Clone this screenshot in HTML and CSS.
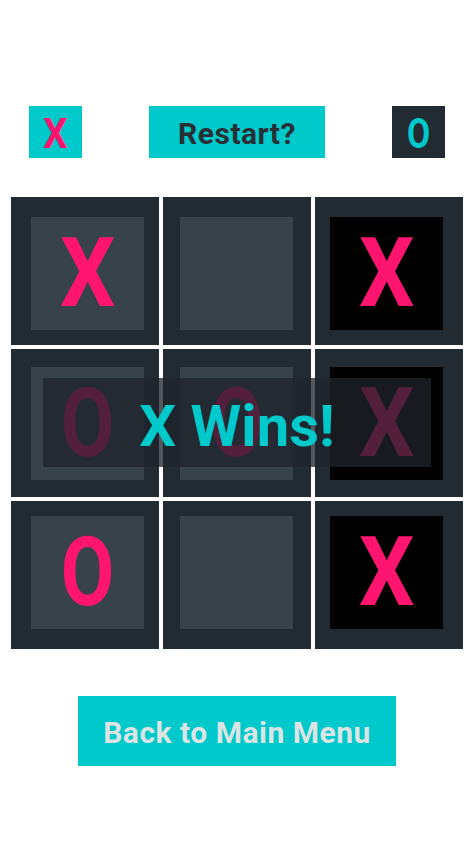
FILE: index.html
```html
<!DOCTYPE html>
<html lang="en">
<head>
<meta charset="utf-8">
<title>Tic Tac Toe</title>
<link rel="stylesheet" href="styles.css">
</head>
<body>
<main class="game">
  <header class="topbar">
    <div class="turn turn-x"><span class="turn-mark">X</span></div>
    <button class="restart">Restart?</button>
    <div class="turn turn-o"><span class="turn-mark o-mark">O</span></div>
  </header>

  <section class="board-wrap">
    <div class="board">
      <div class="cell r1 c1"><div class="slot"><span class="mark x">X</span></div></div>
      <div class="cell r1 c2"><div class="slot"></div></div>
      <div class="cell r1 c3"><div class="slot win"><span class="mark x">X</span></div></div>

      <div class="cell r2 c1"><div class="slot"><span class="mark o">O</span></div></div>
      <div class="cell r2 c2"><div class="slot"><span class="mark o">O</span></div></div>
      <div class="cell r2 c3"><div class="slot win"><span class="mark x">X</span></div></div>

      <div class="cell r3 c1"><div class="slot"><span class="mark o">O</span></div></div>
      <div class="cell r3 c2"><div class="slot"></div></div>
      <div class="cell r3 c3"><div class="slot win"><span class="mark x">X</span></div></div>
    </div>
    <div class="result">X Wins!</div>
  </section>

  <button class="menu-btn">Back to Main Menu</button>
</main>
</body>
</html>
```

FILE: styles.css
```css
* {
  box-sizing: border-box;
}

html, body {
  margin: 0;
  padding: 0;
  background: #ffffff;
}

body {
  font-family: Roboto, "Liberation Sans", sans-serif;
  font-weight: 700;
}

.game {
  width: 474px;
  min-height: 846px;
  display: flex;
  flex-direction: column;
  align-items: center;
  padding-top: 106px;
}

/* ---- top bar: turn indicators and restart ---- */
.topbar {
  width: 100%;
  padding: 0 29px;
  display: flex;
  justify-content: space-between;
  align-items: center;
  height: 52px;
}

.turn {
  width: 53px;
  height: 52px;
  display: flex;
  align-items: center;
  justify-content: center;
}

.turn-x {
  background: #00c9cc;
  color: #ff1470;
}

.turn-o {
  background: #222a32;
  color: #00c9cc;
}

.turn-mark {
  font-size: 42px;
  line-height: 1;
  display: inline-block;
  transform: scaleX(0.92);
  margin-top: 4px;
}

.o-mark {
  transform: scaleX(0.8);
}

.restart {
  width: 176px;
  height: 52px;
  border: 0;
  padding: 0;
  background: #00c9cc;
  color: #283035;
  font-family: inherit;
  font-weight: 700;
  font-size: 30px;
  letter-spacing: 0.5px;
  line-height: 1;
  padding-top: 4px;
}

/* ---- board ---- */
.board-wrap {
  position: relative;
  margin-top: 39px;
  width: 452px;
}

.board {
  display: grid;
  grid-template-columns: repeat(3, 148px);
  grid-template-rows: repeat(3, 148px);
  gap: 4px;
}

.cell {
  background: #222a32;
}

.c1 { padding-left: 20px; }
.c2 { padding-left: 17px; }
.c3 { padding-left: 15px; }
.r1 { padding-top: 20px; }
.r2 { padding-top: 18px; }
.r3 { padding-top: 15px; }

.slot {
  width: 113px;
  height: 113px;
  background: #37424a;
  display: flex;
  align-items: center;
  justify-content: center;
}

.slot.win {
  background: #000000;
}

.mark {
  font-size: 97px;
  line-height: 1;
  color: #ff1470;
  display: inline-block;
}

.mark.x {
  transform: scaleX(0.9);
}

.mark.o {
  transform: scaleX(0.8);
}

/* ---- winner banner over the board ---- */
.result {
  position: absolute;
  left: 32px;
  top: 181px;
  width: 388px;
  height: 89px;
  background: rgba(30, 36, 42, 0.76);
  color: #00c9cc;
  font-size: 58px;
  line-height: 1;
  display: flex;
  align-items: center;
  justify-content: center;
  padding-top: 6px;
}

/* ---- bottom button ---- */
.menu-btn {
  margin-top: 47px;
  width: 318px;
  height: 70px;
  border: 0;
  padding: 0;
  background: #00c9cc;
  color: #dce4e4;
  font-family: inherit;
  font-weight: 700;
  font-size: 30px;
  letter-spacing: 0.5px;
  line-height: 1;
  padding-top: 4px;
}
```
